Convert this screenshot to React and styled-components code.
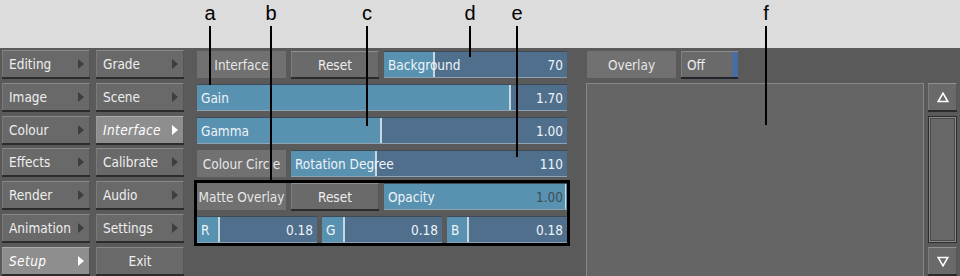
import React from "react";
import styled, { createGlobalStyle, css } from "styled-components";

const Global = createGlobalStyle`
  html, body { margin: 0; padding: 0; background: #5a5a5a; }
  body { width: 960px; height: 276px; overflow: hidden; font-family: "DejaVu Sans Condensed", "DejaVu Sans", sans-serif; }
  * { box-sizing: border-box; }
`;

const Page = styled.div`
  position: relative;
  width: 960px;
  height: 276px;
  display: flex;
  flex-direction: column;
  background: #5a5a5a;
  font-size: 13.5px;
  color: #ececec;
`;

const TopBand = styled.div`
  height: 48px;
  flex: none;
  background: #dcdcdc;
`;

const Main = styled.div`
  flex: 1;
  display: flex;
  align-items: flex-start;
  padding-left: 2px;
`;

const Nav = styled.div`
  display: grid;
  grid-template-columns: 88px 88px;
  grid-auto-rows: 27px;
  column-gap: 6px;
  row-gap: 5.8px;
  padding-top: 2px;
`;

const NavBtn = styled.div`
  position: relative;
  display: flex;
  align-items: center;
  justify-content: ${(p) => (p.$center ? "center" : "flex-start")};
  padding: 0 6px;
  background: ${(p) => (p.$active ? "#8e8e8e" : "#696969")};
  border-top: 1px solid ${(p) => (p.$active ? "#aaaaaa" : "#888")};
  border-left: 1px solid ${(p) => (p.$active ? "#9a9a9a" : "#7a7a7a")};
  border-right: 1px solid #555;
  box-shadow: 0 2px 0 #2c2c2c;
  color: ${(p) => (p.$active ? "#ffffff" : "#eeeeee")};
  font-style: ${(p) => (p.$active ? "italic" : "normal")};
  letter-spacing: ${(p) => (p.$active ? "0.4px" : "0")};
  ${(p) =>
    p.$arrow &&
    css`
      &::after {
        content: "";
        position: absolute;
        right: 5px;
        top: 50%;
        margin-top: -5px;
        border-left: 6px solid ${p.$active ? "#ffffff" : "#3e3e3e"};
        border-top: 5px solid transparent;
        border-bottom: 5px solid transparent;
      }
    `}
`;

const Middle = styled.div`
  width: 370px;
  margin-left: 13px;
  margin-top: 3px;
  display: flex;
  flex-direction: column;
  gap: 6px;
`;

const Row = styled.div`
  display: flex;
  gap: 5px;
  height: 27px;
`;

const Label = styled.div`
  width: ${(p) => p.$w || 89}px;
  flex: none;
  display: flex;
  align-items: center;
  justify-content: center;
  background: #717171;
  color: #e6e6e6;
  white-space: nowrap;
  overflow: hidden;
`;

const Button = styled.div`
  width: ${(p) => p.$w || 88}px;
  flex: none;
  display: flex;
  align-items: center;
  justify-content: center;
  background: #6a6a6a;
  border-top: 1px solid #8e8e8e;
  border-left: 1px solid #7e7e7e;
  border-right: 1px solid #555;
  box-shadow: 0 2px 0 #2b2b2b;
  height: 26px;
  color: #eeeeee;
`;

const LIGHT = "#5991b1";
const DARK = "#506f8d";
const MARK = "#c6d8e2";

const SliderBox = styled.div`
  flex: ${(p) => (p.$w ? "none" : "1")};
  width: ${(p) => (p.$w ? p.$w + "px" : "auto")};
  height: 27px;
  display: flex;
  align-items: center;
  justify-content: space-between;
  padding: 0 4px;
  border-top: 1px solid #3e4a56;
  border-bottom: 1px solid #8da2b2;
  white-space: nowrap;
  overflow: hidden;
`;

const SliderName = styled.span`
  color: #eef4f8;
`;

const SliderValue = styled.span`
  color: ${(p) => (p.$dim ? "#3f4d58" : "#eef4f8")};
`;

function Slider({ name, value, fill, full, w, dim }) {
  const bg = full
    ? `linear-gradient(to right, ${LIGHT} 0px, ${LIGHT} calc(100% - 2px), ${MARK} calc(100% - 2px), ${MARK} calc(100% - 1px), ${LIGHT} calc(100% - 1px))`
    : `linear-gradient(to right, ${LIGHT} 0px, ${LIGHT} ${fill}px, ${MARK} ${fill}px, ${MARK} ${fill + 2}px, ${DARK} ${fill + 2}px)`;
  return (
    <SliderBox $w={w} style={{ backgroundImage: bg }}>
      <SliderName>{name}</SliderName>
      <SliderValue $dim={dim}>{value}</SliderValue>
    </SliderBox>
  );
}

const Boxed = styled.div`
  margin: -3px -3px 0;
  border: 3px solid #000;
  display: flex;
  flex-direction: column;
  gap: 6px;
`;

const Right = styled.div`
  margin-left: 19px;
  margin-top: 3px;
  width: 371px;
  display: flex;
  flex-direction: column;
  gap: 5px;
`;

const TopRow = styled.div`
  display: flex;
  gap: 5px;
  height: 27px;
  padding-left: 1px;
`;

const OffBtn = styled.div`
  width: 57px;
  height: 26px;
  display: flex;
  align-items: center;
  padding-left: 5px;
  background: linear-gradient(to right, #6a6a6a 0px, #6a6a6a 50px, #4a6c9e 50px);
  border-top: 1px solid #8c8c8c;
  border-left: 1px solid #7e7e7e;
  box-shadow: 0 2px 0 #23232e;
  color: #eeeeee;
`;

const Lower = styled.div`
  display: flex;
  gap: 4px;
  height: 193px;
`;

const Panel = styled.div`
  width: 338px;
  background: #656565;
  border: 1px solid #878787;
  border-bottom: none;
`;

const Scroll = styled.div`
  width: 29px;
  display: flex;
  flex-direction: column;
`;

const ScrollBtn = styled.div`
  height: 27px;
  flex: none;
  display: flex;
  align-items: center;
  justify-content: center;
  background: #6a6a6a;
  border-top: 1px solid #909090;
  border-left: 1px solid #7e7e7e;
  border-right: 1px solid #555;
  box-shadow: 0 2px 0 #2b2b2b;
`;

const Track = styled.div`
  height: 127px;
  margin: 6px 0 4px;
  background: #2e2e2e;
  padding: 1px;
  display: flex;
`;

const Thumb = styled.div`
  flex: 1;
  background: #686868;
  border: 1px solid #8a8a8a;
  box-shadow: inset 1px 1px 0 #4a4a4a, inset -1px -1px 0 #4a4a4a;
`;

const Notes = styled.div`
  position: absolute;
  inset: 0;
  pointer-events: none;
`;

const Note = styled.div`
  position: absolute;
  left: ${(p) => p.$x}px;
  top: 0;
  width: 0;
`;

const NoteLetter = styled.span`
  position: absolute;
  top: 1px;
  left: -15px;
  width: 32px;
  text-align: center;
  font-family: "Liberation Sans", Arial, sans-serif;
  font-size: 20px;
  color: #000;
  line-height: 24px;
`;

const NoteLine = styled.div`
  position: absolute;
  top: 26px;
  left: 0;
  width: 2px;
  height: ${(p) => p.$len}px;
  background: #000;
`;

function Tri({ down }) {
  return (
    <svg width="12" height="11" viewBox="0 0 12 11">
      {down ? (
        <path d="M1.2 1.5 H10.8 L6 9.8 Z" fill="none" stroke="#fff" strokeWidth="1.6" />
      ) : (
        <path d="M6 1.2 L10.8 9.5 H1.2 Z" fill="none" stroke="#fff" strokeWidth="1.6" />
      )}
    </svg>
  );
}

const navLeft = ["Editing", "Image", "Colour", "Effects", "Render", "Animation", "Setup"];
const navRight = ["Grade", "Scene", "Interface", "Calibrate", "Audio", "Settings", "Exit"];

const notes = [
  { l: "a", x: 209, len: 59 },
  { l: "b", x: 270, len: 154 },
  { l: "c", x: 366, len: 100 },
  { l: "d", x: 469, len: 31 },
  { l: "e", x: 516, len: 131 },
  { l: "f", x: 765, len: 99 },
];

export default function App() {
  const cells = [];
  navLeft.forEach((l, i) => {
    const r = navRight[i];
    cells.push(
      <NavBtn key={"l" + i} $arrow $active={l === "Setup"}>
        {l}
      </NavBtn>
    );
    cells.push(
      <NavBtn key={"r" + i} $arrow={r !== "Exit"} $center={r === "Exit"} $active={r === "Interface"}>
        {r}
      </NavBtn>
    );
  });

  return (
    <Page>
      <Global />
      <TopBand />
      <Main>
        <Nav>{cells}</Nav>
        <Middle>
          <Row>
            <Label>Interface</Label>
            <Button>Reset</Button>
            <Slider name="Background" value="70" fill={49} />
          </Row>
          <Row>
            <Slider name="Gain" value="1.70" fill={312} />
          </Row>
          <Row>
            <Slider name="Gamma" value="1.00" fill={183} />
          </Row>
          <Row>
            <Label>Colour Circle</Label>
            <Slider name="Rotation Degree" value="110" fill={84} />
          </Row>
          <Boxed>
            <Row>
              <Label>Matte Overlay</Label>
              <Button>Reset</Button>
              <Slider name="Opacity" value="1.00" full dim />
            </Row>
            <Row>
              <Slider name="R" value="0.18" fill={21} w={120} />
              <Slider name="G" value="0.18" fill={21} w={120} />
              <Slider name="B" value="0.18" fill={20} w={120} />
            </Row>
          </Boxed>
        </Middle>
        <Right>
          <TopRow>
            <Label>Overlay</Label>
            <OffBtn>Off</OffBtn>
          </TopRow>
          <Lower>
            <Panel />
            <Scroll>
              <ScrollBtn>
                <Tri />
              </ScrollBtn>
              <Track>
                <Thumb />
              </Track>
              <ScrollBtn>
                <Tri down />
              </ScrollBtn>
            </Scroll>
          </Lower>
        </Right>
      </Main>
      <Notes>
        {notes.map((n) => (
          <Note key={n.l} $x={n.x}>
            <NoteLetter>{n.l}</NoteLetter>
            <NoteLine $len={n.len} />
          </Note>
        ))}
      </Notes>
    </Page>
  );
}
